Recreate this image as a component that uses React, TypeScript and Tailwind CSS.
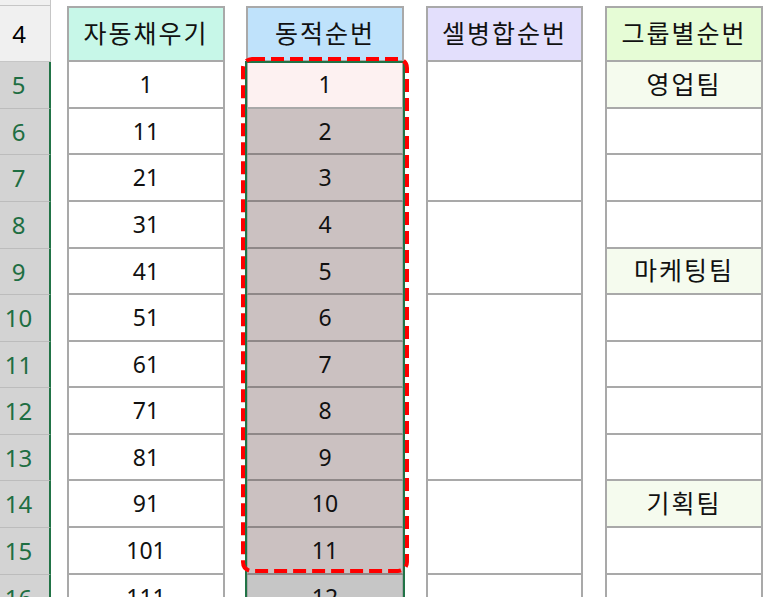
import React from "react";

const RS: Record<number, string> = {
  5: "row-start-3",
  6: "row-start-4",
  7: "row-start-5",
  8: "row-start-6",
  9: "row-start-7",
  10: "row-start-8",
  11: "row-start-9",
  12: "row-start-10",
  13: "row-start-11",
  14: "row-start-12",
  15: "row-start-13",
  16: "row-start-14",
};

const SPAN: Record<number, string> = {
  1: "row-span-1",
  2: "row-span-2",
  3: "row-span-3",
  4: "row-span-4",
};

const rows = [5, 6, 7, 8, 9, 10, 11, 12, 13, 14, 15, 16];

const merges: [number, number][] = [
  [5, 3],
  [8, 2],
  [10, 4],
  [14, 2],
  [16, 1],
];

const groups: Record<number, string> = { 5: "영업팀", 9: "마케팅팀", 14: "기획팀" };

const cellBase =
  "flex items-center justify-center border-x-2 border-b-2 border-[#a9a9a9] text-[23px] text-[#111]";

const headBase =
  "row-start-2 flex items-center justify-center border-2 border-[#a9a9a9] text-[25px] tracking-[2px] text-[#111]";

export default function App() {
  return (
    <div className="h-[597px] w-[781px] overflow-hidden bg-white font-['Noto_Sans','Noto_Sans_CJK_KR',sans-serif]">
      <div className="grid grid-cols-[51px_16px_158px_21px_158px_22px_157px_22px_158px_1fr] grid-rows-[6px_56px_47px_46px_47px_47px_46px_47px_46px_47px_46px_47px_47px_47px]">
        {/* top strip row 3 */}
        <div className="col-start-1 row-start-1 border-b border-r border-[#c6c6c6] bg-[#f0f0f0]" />
        {/* row 4 header */}
        <div className="col-start-1 row-start-2 flex items-center justify-center border-b border-r border-[#c6c6c6] bg-[#f0f0f0] pr-[12px] text-[24px] text-black">
          4
        </div>
        {/* column headers */}
        <div className={`col-start-3 ${headBase} bg-[#c7f7e8]`}>자동채우기</div>
        <div className={`col-start-5 ${headBase} bg-[#bfe2fb]`}>동적순번</div>
        <div className={`col-start-7 ${headBase} bg-[#e3dffc]`}>셀병합순번</div>
        <div className={`col-start-9 ${headBase} bg-[#e6fcd6]`}>그룹별순번</div>

        {rows.map((r, i) => (
          <React.Fragment key={r}>
            <div
              className={`col-start-1 ${RS[r]} flex items-center justify-center border-b border-[#bcbcbc] border-r-2 border-r-[#217346] bg-[#d3d3d3] pr-[12px] text-[24px] text-[#1e6e42]`}
            >
              {r}
            </div>
            <div className={`col-start-3 ${RS[r]} ${cellBase} bg-white`}>{1 + i * 10}</div>
            <div
              className={`col-start-5 ${RS[r]} ${cellBase} ${
                r === 5 ? "bg-[#fdf1f1]" : r === 16 ? "bg-[#c6c6c6]" : "bg-[#cbc1c1] border-b-[#8f8888]"
              }`}
            >
              {i + 1}
            </div>
            <div
              className={`col-start-9 ${RS[r]} ${cellBase} ${
                groups[r] ? "bg-[#f5fbee] text-[25px] tracking-[2px]" : "bg-white"
              }`}
            >
              {groups[r] ?? ""}
            </div>
          </React.Fragment>
        ))}

        {merges.map(([start, span]) => (
          <div key={start} className={`col-start-7 ${RS[start]} ${SPAN[span]} ${cellBase} bg-white`} />
        ))}

        {/* selection border (green) */}
        <div className="pointer-events-none relative col-start-5 row-start-3 row-span-12">
          <div className="absolute -left-[1px] -right-[1px] -top-[1px] bottom-0 border-2 border-[#217346]" />
        </div>

        {/* red dashed annotation */}
        <div className="pointer-events-none relative col-start-5 row-start-3 row-span-11">
          <svg className="absolute -left-[6px] -top-[6px]" width="170" height="522" viewBox="0 0 170 522">
            <rect
              x="3"
              y="3"
              width="164"
              height="512"
              rx="9"
              ry="9"
              fill="none"
              stroke="#ff0000"
              strokeWidth="4"
              strokeDasharray="13 6"
            />
          </svg>
        </div>
      </div>
    </div>
  );
}
